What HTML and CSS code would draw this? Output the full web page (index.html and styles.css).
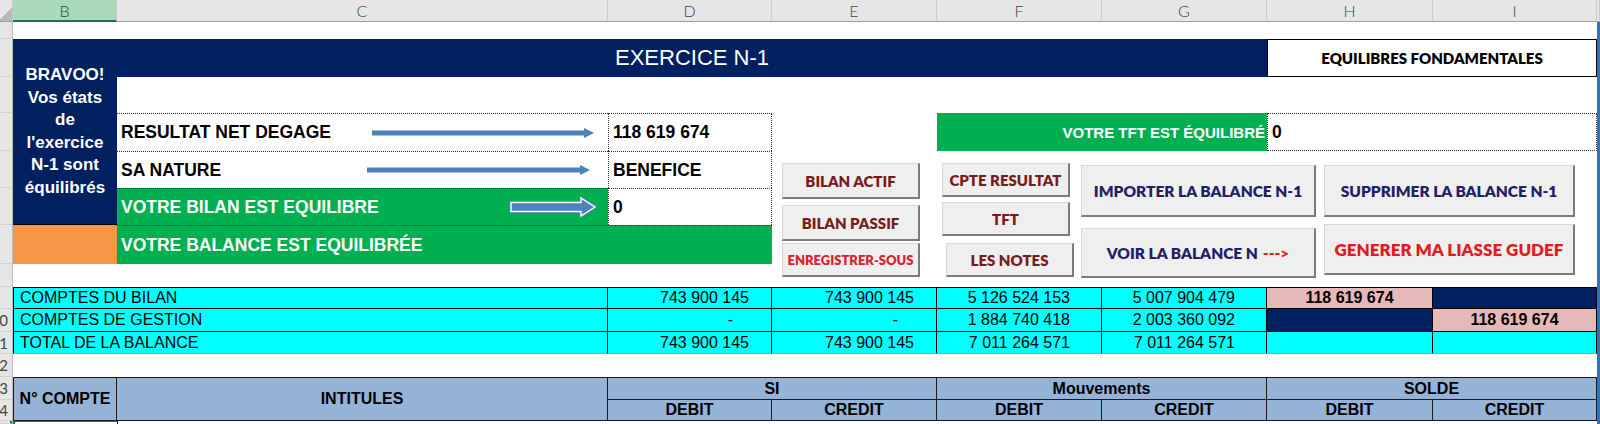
FILE: index.html
```html
<!DOCTYPE html>
<html lang="fr">
<head>
    <meta charset="UTF-8">
    <meta name="viewport" content="width=device-width, initial-scale=1.0">
    <title>Balance N-1</title>
    <link rel="stylesheet" href="styles.css">
</head>
<body>
    <div class="sheet">
        <!-- Column headers -->
        <div class="corner"></div>
        <div class="col-head selected">B</div>
        <div class="col-head">C</div>
        <div class="col-head">D</div>
        <div class="col-head">E</div>
        <div class="col-head">F</div>
        <div class="col-head">G</div>
        <div class="col-head">H</div>
        <div class="col-head">I</div>
        <div class="col-head"></div>

        <!-- Row numbers: the gutter is scrolled, only the units digit shows -->
        <div class="gutter">
            <div></div><div></div><div></div><div></div><div></div>
            <div></div><div></div><div></div><div></div>
            <div>0</div><div>1</div><div>2</div><div>3</div><div>4</div>
            <div class="current"></div>
        </div>
        <div class="edge-bar"></div>

        <!-- Status block -->
        <div class="cell bravo cB rows-2-6">BRAVOO!<br>Vos états<br>de<br>l'exercice<br>N-1 sont<br>équilibrés</div>
        <div class="cell orange cB r7"></div>
        <div class="cell title span-CG r2">EXERCICE N-1</div>
        <div class="cell equilibres span-HI r2">EQUILIBRES FONDAMENTALES</div>

        <div class="cell label cC r4">
            RESULTAT NET DEGAGE
            <svg class="arrow arrow-result" width="222" height="12" viewBox="0 0 222 12">
                <rect x="0" y="3.5" width="213" height="5" fill="#4f81bd"/>
                <polygon points="212,1 222,6 212,11" fill="#4f81bd"/>
            </svg>
        </div>
        <div class="cell value cD r4">118 619 674</div>

        <div class="cell label cC r5">
            SA NATURE
            <svg class="arrow arrow-nature" width="223" height="12" viewBox="0 0 223 12">
                <rect x="0" y="3.5" width="214" height="5" fill="#4f81bd"/>
                <polygon points="213,1 223,6 213,11" fill="#4f81bd"/>
            </svg>
        </div>
        <div class="cell value cD r5">BENEFICE</div>

        <div class="cell label ok cC r6">
            VOTRE BILAN EST EQUILIBRE
            <svg class="arrow arrow-bilan" width="88" height="22" viewBox="0 0 88 22">
                <path d="M2 6.5 H72 V2 L86 11 L72 20 V15.5 H2 Z" fill="#4f81bd" stroke="#4f81bd" stroke-width="3"/>
                <path d="M2 6.5 H72 V2 L86 11 L72 20 V15.5 H2 Z" fill="#4f81bd" stroke="#fff" stroke-width="1.4"/>
            </svg>
        </div>
        <div class="cell value cD r6">0</div>
        <div class="cell label ok span-CD r7">VOTRE BALANCE EST EQUILIBRÉE</div>

        <div class="cell tft span-FG r4">VOTRE TFT EST ÉQUILIBRÉ</div>
        <div class="cell tft-value span-HI r4">0</div>

        <!-- Macro buttons -->
        <div class="buttons span-EI rows-5-8">
            <div class="btn-col col-etats">
                <button class="btn etat first">BILAN ACTIF</button>
                <button class="btn etat passif">BILAN PASSIF</button>
                <button class="btn etat save">ENREGISTRER-SOUS</button>
            </div>
            <div class="btn-col col-resultat">
                <button class="btn etat first short">CPTE RESULTAT</button>
                <button class="btn etat short tft-btn">TFT</button>
                <button class="btn etat short notes">LES NOTES</button>
            </div>
            <div class="btn-col col-balance">
                <button class="btn big first">IMPORTER LA BALANCE N-1</button>
                <button class="btn big voir">VOIR LA BALANCE N <span class="red">---&gt;</span></button>
            </div>
            <div class="btn-col col-liasse">
                <button class="btn big first">SUPPRIMER LA BALANCE N-1</button>
                <button class="btn big liasse">GENERER MA LIASSE GUDEF</button>
            </div>
        </div>

        <!-- Balance totals -->
        <div class="cell cy name span-BC r9 top">COMPTES DU BILAN</div>
        <div class="cell cy num cD r9 top">743 900 145</div>
        <div class="cell cy num cE r9 top">743 900 145</div>
        <div class="cell cy num mv cF r9 top">5 126 524 153</div>
        <div class="cell cy num mv cG r9 top">5 007 904 479</div>
        <div class="cell cy solde cH r9 top">118 619 674</div>
        <div class="cell cy navy cI r9 top"></div>

        <div class="cell cy name span-BC r10">COMPTES DE GESTION</div>
        <div class="cell cy num dash cD r10">-</div>
        <div class="cell cy num dash cE r10">-</div>
        <div class="cell cy num mv cF r10">1 884 740 418</div>
        <div class="cell cy num mv cG r10">2 003 360 092</div>
        <div class="cell cy navy cH r10"></div>
        <div class="cell cy solde cI r10">118 619 674</div>

        <div class="cell cy name span-BC r11 last">TOTAL DE LA BALANCE</div>
        <div class="cell cy num cD r11 last">743 900 145</div>
        <div class="cell cy num cE r11 last">743 900 145</div>
        <div class="cell cy num mv cF r11 last">7 011 264 571</div>
        <div class="cell cy num mv cG r11 last">7 011 264 571</div>
        <div class="cell cy cH r11 last"></div>
        <div class="cell cy cI r11 last"></div>

        <!-- Balance table head -->
        <div class="cell hd first-col cB rows-13-14">N° COMPTE</div>
        <div class="cell hd cC rows-13-14">INTITULES</div>
        <div class="cell hd span-DE r13">SI</div>
        <div class="cell hd span-FG r13">Mouvements</div>
        <div class="cell hd span-HI r13">SOLDE</div>
        <div class="cell hd sub cD r14">DEBIT</div>
        <div class="cell hd sub cE r14">CREDIT</div>
        <div class="cell hd sub cF r14">DEBIT</div>
        <div class="cell hd sub cG r14">CREDIT</div>
        <div class="cell hd sub cH r14">DEBIT</div>
        <div class="cell hd sub cI r14">CREDIT</div>

        <div class="cell active-cell cB r15"></div>
        <div class="cell next-row cC r15"></div>
    </div>
</body>
</html>
```

FILE: styles.css
```css
* {
    margin: 0;
    padding: 0;
    box-sizing: border-box;
}

body {
    font-family: "Liberation Sans", Arial, sans-serif;
    background: #ffffff;
    color: #000000;
    overflow: hidden;
}

.sheet {
    display: grid;
    width: 1600px;
    height: 424px;
    grid-template-columns: 13px 104px 491px 164px 165px 165px 165px 166px 164px 3px;
    grid-template-rows: 22px 17px 38px 36px 38px 37px 37px 39px 23px 22px 23px 22px 23px 23px 21px 3px;
}

/* Excel chrome */
.corner {
    grid-row: 1;
    grid-column: 1;
    background: linear-gradient(135deg, #e6e6e6 58%, #b9b9b9 58%);
    border-right: 1px solid #c8c8c8;
    border-bottom: 1px solid #a0a0a0;
}

.col-head {
    grid-row: 1;
    display: flex;
    align-items: center;
    justify-content: center;
    background: #e6e6e6;
    border-right: 1px solid #cacaca;
    border-bottom: 1px solid #a0a0a0;
    font-family: Lato, "Liberation Sans", sans-serif;
    font-weight: 300;
    font-size: 16px;
    color: #444444;
}

.col-head.selected {
    background: #a9d9b9;
    border-bottom: 2px solid #217346;
    color: #2c4a36;
}

.gutter {
    grid-column: 1;
    grid-row: 2 / -1;
    display: grid;
    grid-template-rows: 17px 38px 36px 38px 37px 37px 39px 23px 22px 23px 22px 23px 23px 21px 3px;
    background: #e6e6e6;
    border-right: 1px solid #bdbdbd;
}

.gutter div {
    display: flex;
    align-items: center;
    justify-content: flex-end;
    padding-right: 4px;
    overflow: hidden;
    white-space: nowrap;
    border-bottom: 1px solid #d2d2d2;
    font-family: Lato, "Liberation Sans", sans-serif;
    font-size: 15px;
    color: #444444;
}

.gutter .current {
    border-right: 2px solid #217346;
}

.edge-bar {
    grid-column: 10;
    grid-row: 2 / -1;
    background: #2b76c2;
}

/* Grid placement */
.cB { grid-column: 2; }
.cC { grid-column: 3; }
.cD { grid-column: 4; }
.cE { grid-column: 5; }
.cF { grid-column: 6; }
.cG { grid-column: 7; }
.cH { grid-column: 8; }
.cI { grid-column: 9; }
.span-BC { grid-column: 2 / 4; }
.span-CD { grid-column: 3 / 5; }
.span-CG { grid-column: 3 / 8; }
.span-DE { grid-column: 4 / 6; }
.span-FG { grid-column: 6 / 8; }
.span-HI { grid-column: 8 / 10; }
.span-EI { grid-column: 5 / 10; }

.r2 { grid-row: 3; }
.r4 { grid-row: 5; }
.r5 { grid-row: 6; }
.r6 { grid-row: 7; }
.r7 { grid-row: 8; }
.r9 { grid-row: 10; }
.r10 { grid-row: 11; }
.r11 { grid-row: 12; }
.r13 { grid-row: 14; }
.r14 { grid-row: 15; }
.r15 { grid-row: 16; }
.rows-2-6 { grid-row: 3 / 8; }
.rows-5-8 { grid-row: 6 / 10; }
.rows-13-14 { grid-row: 14 / 16; }

.cell {
    display: flex;
    align-items: center;
    min-width: 0;
    overflow: hidden;
    white-space: nowrap;
}

/* Header band */
.bravo {
    justify-content: center;
    text-align: center;
    white-space: normal;
    background: #002060;
    color: #ffffff;
    font-weight: bold;
    font-size: 17px;
    line-height: 22.5px;
    border-bottom: 1px solid #000000;
}

.orange {
    background: #f79646;
}

.title {
    justify-content: center;
    background: #002060;
    color: #ffffff;
    font-size: 22px;
}

.equilibres {
    justify-content: center;
    border: 1px solid #000000;
    font-family: Lato, "Liberation Sans", sans-serif;
    font-weight: 800;
    font-size: 15px;
}

/* Result lines */
.label {
    padding-left: 4px;
    font-size: 17.5px;
    font-weight: bold;
    border-top: 1px dotted #333333;
}

.label.ok {
    background: #00b050;
    color: #ffffff;
}

.arrow {
    flex: none;
    margin-left: auto;
}

.arrow-result { margin-right: 14px; }
.arrow-nature { margin-right: 18px; }
.arrow-bilan { margin-right: 11px; }

.value {
    padding-left: 4px;
    font-size: 17.5px;
    font-weight: bold;
    border-top: 1px dotted #333333;
    border-left: 1px dotted #333333;
    border-right: 1px dotted #333333;
}

.tft {
    justify-content: flex-end;
    padding-right: 2px;
    background: #00b050;
    color: #ffffff;
    font-size: 15px;
    font-weight: bold;
}

.tft-value {
    padding-left: 4px;
    font-size: 17.5px;
    font-weight: bold;
    border: 1px dotted #333333;
}

/* Buttons */
.buttons {
    display: flex;
    align-items: flex-start;
}

.btn-col {
    display: flex;
    flex-direction: column;
    flex: none;
}

.btn {
    display: flex;
    align-items: center;
    justify-content: center;
    white-space: nowrap;
    background: #efefef;
    border: none;
    border-top: 1px solid #d8d8d8;
    border-left: 1px solid #d8d8d8;
    border-right: 2px solid #7c7c7c;
    border-bottom: 2px solid #7c7c7c;
    font-family: Lato, "Liberation Sans", sans-serif;
    font-weight: 800;
    cursor: pointer;
}

.btn.etat {
    height: 36px;
    font-size: 15px;
    color: #7a1b1b;
}

.col-etats {
    width: 138px;
    margin-left: 10px;
}

.col-etats .first { margin-top: 12px; }
.col-etats .passif { margin-top: 6px; }

.btn.save {
    height: 34px;
    margin-top: 2px;
    font-size: 13px;
    color: #d8232b;
}

.col-resultat {
    width: 128px;
    margin-left: 22px;
}

.btn.short { height: 34px; }
.col-resultat .first { margin-top: 12px; }
.col-resultat .tft-btn { margin-top: 5px; }

.btn.notes {
    width: 128px;
    margin-top: 7px;
    margin-left: 4px;
}

.btn.big {
    font-size: 15.5px;
    color: #1f2166;
}

.col-balance {
    width: 235px;
    margin-left: 11px;
}

.col-liasse {
    width: 251px;
    margin-left: 8px;
}

.col-balance .first,
.col-liasse .first {
    height: 52px;
    margin-top: 14px;
}

.btn.voir {
    height: 50px;
    margin-top: 11px;
}

.btn.voir .red {
    margin-left: 5px;
    color: #e01b22;
}

.btn.liasse {
    height: 51px;
    margin-top: 7px;
    font-size: 17px;
    color: #e01b22;
}

/* Totals table */
.cy {
    background: #00ffff;
    font-size: 16px;
    border-right: 1px solid #000000;
    border-bottom: 1px solid #000000;
}

.cy.top {
    border-top: 1px solid #000000;
}

.cy.last {
    border-bottom: 1px solid #8fa3a3;
}

.cy.name {
    padding-left: 6px;
    border-left: 1px solid #000000;
}

.cy.num {
    justify-content: flex-end;
    padding-right: 22px;
}

.cy.mv {
    padding-right: 31px;
}

.cy.dash {
    padding-right: 38px;
}

.cy.solde {
    justify-content: center;
    background: #e6b8b7;
    font-size: 16px;
    font-weight: bold;
}

.cy.navy {
    background: #002060;
}

/* Balance table head */
.hd {
    justify-content: center;
    background: #95b3d7;
    font-size: 16px;
    font-weight: bold;
    border-top: 1px solid #1b1b1b;
    border-right: 1px solid #1b1b1b;
    border-bottom: 1px solid #1b1b1b;
}

.hd.sub {
    border-top: none;
}

.hd.first-col {
    border-left: 1px solid #1b1b1b;
}

.active-cell {
    border-left: 2px solid #217346;
    border-top: 1px solid #217346;
}

.next-row {
    border-left: 1px solid #1b1b1b;
}
```
